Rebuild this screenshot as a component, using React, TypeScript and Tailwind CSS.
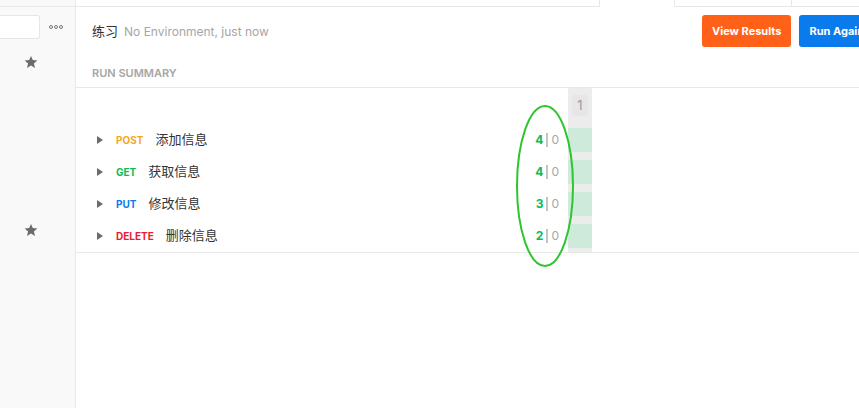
import React from "react";

const rows = [
  { method: "POST", color: "text-[#f5a623]", name: "添加信息", pass: 4, fail: 0 },
  { method: "GET", color: "text-[#0cbb52]", name: "获取信息", pass: 4, fail: 0 },
  { method: "PUT", color: "text-[#097bed]", name: "修改信息", pass: 3, fail: 0 },
  { method: "DELETE", color: "text-[#ed1b2e]", name: "删除信息", pass: 2, fail: 0 },
];

const Star: React.FC = () => (
  <svg width="14" height="14" viewBox="0 0 24 24" className="fill-[#6b6b6b]">
    <path d="M12 1.5l3.1 7.2 7.8.7-5.9 5.2 1.8 7.7L12 18.2l-6.8 4.1 1.8-7.7-5.9-5.2 7.8-.7z" />
  </svg>
);

const Sidebar: React.FC = () => (
  <div className="w-[76px] shrink-0 h-full bg-[#f9f9f9] border-r border-[#e8e8e8] flex flex-col">
    <div className="h-[7px] border-b border-[#e8e8e8]" />
    <div className="flex items-center mt-[8px] h-[24px]">
      <div className="w-[40px] h-[24px] bg-white border border-l-0 border-[#e6e6e6] rounded-r-[3px]" />
      <div className="flex gap-[1px] ml-[9px]">
        <span className="w-[4px] h-[4px] rounded-full border border-[#777]" />
        <span className="w-[4px] h-[4px] rounded-full border border-[#777]" />
        <span className="w-[4px] h-[4px] rounded-full border border-[#777]" />
      </div>
    </div>
    <div className="flex mt-[16px] pl-[24px]">
      <Star />
    </div>
    <div className="flex mt-[154px] pl-[24px]">
      <Star />
    </div>
  </div>
);

const Row: React.FC<(typeof rows)[number]> = ({ method, color, name, pass, fail }) => (
  <div className="h-[24px] flex items-center">
    <div className="flex-1 flex items-center pl-[21px]">
      <span className="w-0 h-0 border-y-[4px] border-y-transparent border-l-[6px] border-l-[#6b6b6b]" />
      <span className={`ml-[13px] text-[10px] font-bold ${color}`}>{method}</span>
      <span className="ml-[12px] text-[13px] text-[#333]">{name}</span>
    </div>
    <div className="flex items-center pr-[9px] text-[12px]">
      <span className="font-bold text-[#0cbb52]">{pass}</span>
      <span className="mx-[3px] w-[2px] h-[14px] bg-[#c4c4c4]" />
      <span className="text-[#a6a6a6]">{fail}</span>
    </div>
  </div>
);

export default function App() {
  return (
    <div
      className="w-[859px] h-[408px] flex bg-white overflow-hidden"
      style={{ fontFamily: "Inter, 'Noto Sans CJK SC', sans-serif" }}
    >
      <Sidebar />
      <div className="flex-1 relative overflow-hidden">
        <div className="flex h-[7px]">
          <div className="w-[523px] border-b border-[#e8e8e8]" />
          <div className="w-[76px] border-x border-[#e8e8e8]" />
          <div className="w-[117px] border-b border-r border-[#e8e8e8]" />
          <div className="flex-1 border-b border-[#e8e8e8]" />
        </div>
        <div className="flex items-center h-[32px] mt-[8px] w-[900px]">
          <div className="w-[626px] shrink-0 pl-[16px] pt-[1px] flex items-center text-[12px]">
            <span className="text-[13px] text-[#333]">练习</span>
            <span className="ml-[6px] text-[#a6a6a6]">No Environment, just now</span>
          </div>
          <button className="shrink-0 px-[10px] h-[32px] rounded-[3px] bg-[#ff6119] text-white text-[11px] font-bold">
            View Results
          </button>
          <button className="shrink-0 ml-[8px] px-[10px] h-[32px] rounded-[3px] bg-[#097bed] text-white text-[11px] font-bold">
            Run Again
          </button>
        </div>
        <div className="h-[41px] pl-[16px] pt-[12px] border-b border-[#e8e8e8]">
          <span className="text-[11px] font-semibold text-[#a6a6a6]">RUN SUMMARY</span>
        </div>
        <div className="border-b border-[#e8e8e8] flex">
          <div className="w-[492px] flex flex-col pt-[40px] pb-[4px] gap-[8px]">
            {rows.map((r) => (
              <Row key={r.method} {...r} />
            ))}
          </div>
          <div className="w-[24px] bg-[#ececec] flex flex-col gap-[8px] pb-[4px]">
            <div className="mx-[4px] mt-[7px] mb-[4px] h-[21px] rounded-[2px] bg-[#e6e6e6] flex items-center justify-center text-[13px] text-[#999]">
              1
            </div>
            {rows.map((r) => (
              <div key={r.method} className="h-[24px] bg-[#cdeadb]" />
            ))}
          </div>
        </div>
        <svg className="absolute left-[439px] top-[104px]" width="62" height="166">
          <ellipse cx="30" cy="82" rx="28" ry="80" fill="none" stroke="#2ec52e" strokeWidth="2" />
        </svg>
      </div>
    </div>
  );
}
